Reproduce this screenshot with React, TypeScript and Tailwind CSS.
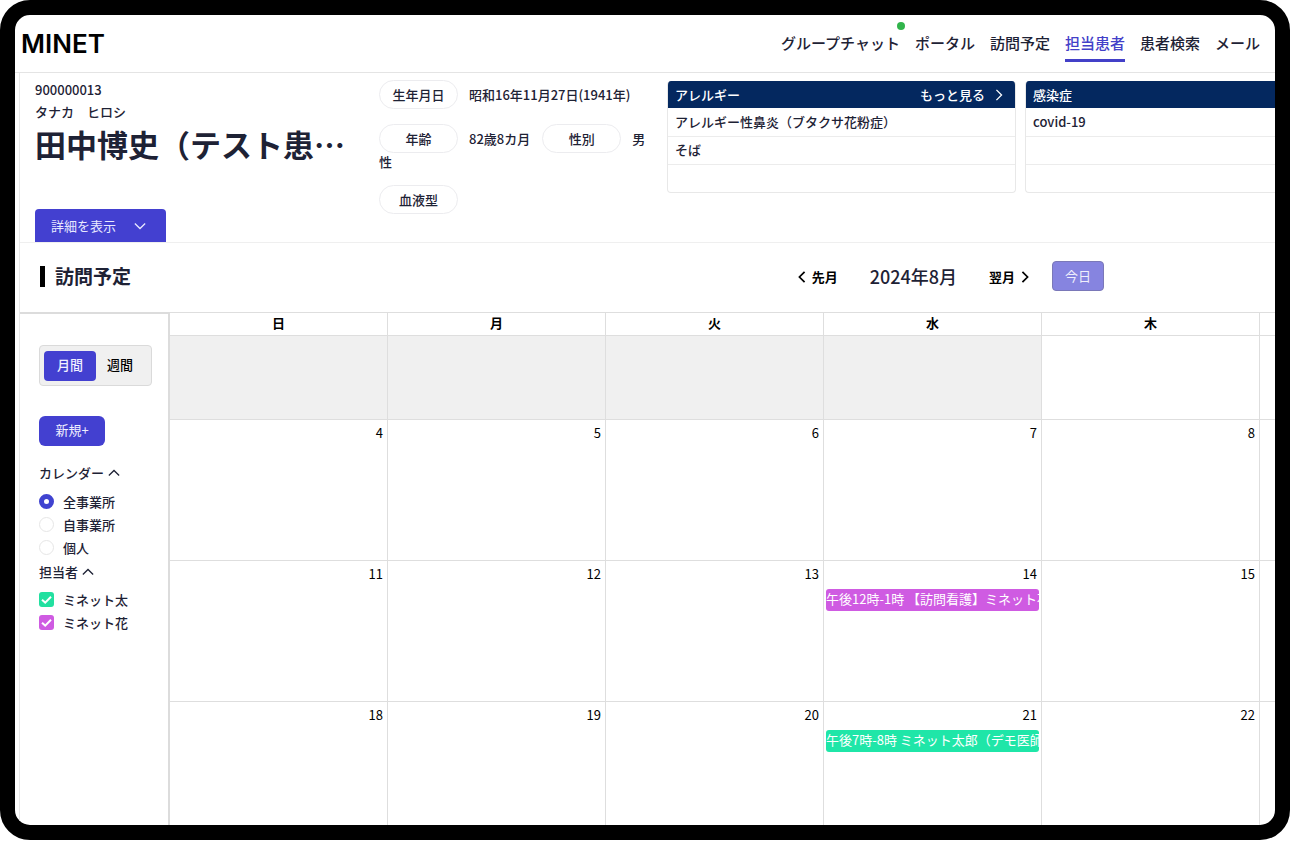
import { useState, type ReactNode } from "react";
import clsx from "clsx";

type Direction = "left" | "right" | "up" | "down";

const chevrons: Record<Direction, string> = {
  left: "M10 1 4 7l6 6",
  right: "M4 1l6 6-6 6",
  up: "M1 10l6-6 6 6",
  down: "M1 4l6 6 6-6",
};

function Chevron({ direction, className }: { direction: Direction; className: string }) {
  return (
    <svg viewBox="0 0 14 14" fill="none" stroke="currentColor" className={className} aria-hidden="true">
      <path d={chevrons[direction]} />
    </svg>
  );
}

const navItems = [
  { label: "グループチャット", notice: true },
  { label: "ポータル" },
  { label: "訪問予定" },
  { label: "担当患者", active: true },
  { label: "患者検索" },
  { label: "メール" },
];

function Header() {
  return (
    <header className="flex h-[58px] shrink-0 items-center justify-between border-b border-[#e4e4e4] pl-[6px] pr-[15px]">
      <a href="#" className="font-[Inter,sans-serif] text-[26px] font-semibold leading-8 text-black">
        MINET
      </a>
      <nav className="flex gap-[15px] pb-[2px]">
        {navItems.map((item) => (
          <a
            key={item.label}
            href="#"
            className={clsx(
              "relative whitespace-nowrap border-b-[3px] pb-[6px] pt-[9px] text-[15px] font-medium leading-5",
              item.active ? "border-[#4340c8] text-[#4340c8]" : "border-transparent text-[#1e2235]",
            )}
          >
            {item.label}
            {item.notice && <span className="absolute -right-[5px] -top-[2px] size-2 rounded-full bg-[#31b44b]" />}
          </a>
        ))}
      </nav>
    </header>
  );
}

function Pill({ children }: { children: ReactNode }) {
  return (
    <span className="mr-[11px] inline-flex h-[29px] w-[79px] items-center justify-center rounded-full border border-[#ececef] align-middle">
      {children}
    </span>
  );
}

function InfoTable({ title, rows, more, className }: { title: string; rows: string[]; more?: boolean; className: string }) {
  return (
    <div className={clsx("overflow-hidden border-[#e8e8e8]", className)}>
      <table className="w-full border-collapse text-left">
        <thead className="bg-[#04285f] text-white">
          <tr>
            <th className="h-[27px] pl-[7px] pr-[10px] font-medium">
              <div className="flex items-center justify-between">
                {title}
                {more && (
                  <a href="#" className="flex items-center gap-2">
                    もっと見る
                    <Chevron direction="right" className="size-3 stroke-[1.5]" />
                  </a>
                )}
              </div>
            </th>
          </tr>
        </thead>
        <tbody>
          {rows.map((row, i) => (
            <tr key={i} className="border-b border-[#ececec] last:border-b-0">
              <td className="h-7 pl-[7px]">{row}</td>
            </tr>
          ))}
        </tbody>
      </table>
    </div>
  );
}

function PatientPanel() {
  return (
    <section className="flex h-[170px] shrink-0 overflow-hidden border-b border-[#efefef] pl-[15px] font-medium">
      <div className="flex w-[344px] shrink-0 flex-col">
        <p className="pt-[7px] leading-5">900000013</p>
        <p className="pt-[2px] leading-5">タナカ　ヒロシ</p>
        <h1 className="whitespace-nowrap text-[31px] font-bold leading-[44px]">田中博史（テスト患…</h1>
        <button className="mt-auto flex h-[33px] w-[131px] items-center gap-[18px] rounded-t-[4px] bg-[#4340d0] pl-4 font-normal text-[#e8e8ff]">
          詳細を表示
          <Chevron direction="down" className="size-3 stroke-[1.5]" />
        </button>
      </div>
      <div className="flex w-[272px] shrink-0 flex-col gap-[15px] pt-[7px] leading-4">
        <div>
          <Pill>生年月日</Pill>
          <span className="align-middle">昭和16年11月27日(1941年)</span>
        </div>
        <div>
          <Pill>年齢</Pill>
          <span className="mr-3 align-middle">82歳8カ月</span>
          <Pill>性別</Pill>
          <span className="align-middle">男性</span>
        </div>
        <div>
          <Pill>血液型</Pill>
        </div>
      </div>
      <div className="flex min-w-0 grow items-start gap-[9px] pl-4 pt-2">
        <InfoTable
          title="アレルギー"
          more
          rows={["アレルギー性鼻炎（ブタクサ花粉症）", "そば", ""]}
          className="w-[349px] shrink-0 rounded-[4px] border-x border-b"
        />
        <InfoTable title="感染症" rows={["covid-19", "", ""]} className="grow rounded-l-[4px] border-b border-l" />
      </div>
    </section>
  );
}

function ScheduleHeader() {
  return (
    <div className="flex h-[69px] shrink-0 items-center pb-[3px] pl-5 pr-[171px]">
      <h2 className="flex items-center gap-[10px] text-[19px] font-bold leading-7">
        <span className="h-[21px] w-[5px] bg-black" />
        訪問予定
      </h2>
      <div className="ml-auto flex items-center">
        <button className="flex items-center gap-1 pt-[2px] font-bold text-black">
          <Chevron direction="left" className="size-3 stroke-2" />
          先月
        </button>
        <p className="mx-8 text-[18px] font-medium leading-7">2024年8月</p>
        <button className="flex items-center gap-1 pt-[2px] font-bold text-black">
          翌月
          <Chevron direction="right" className="size-3 stroke-2" />
        </button>
        <button className="ml-[21px] h-[30px] w-[52px] rounded-[4px] border border-[#7a78b8] bg-[#8684e0] text-[#efeffc]">
          今日
        </button>
      </div>
    </div>
  );
}

const calendars = ["全事業所", "自事業所", "個人"];
const staff = [
  { name: "ミネット太", color: "bg-[#22e0a0]" },
  { name: "ミネット花", color: "bg-[#cf5be2]" },
];

function StaffCheckbox({ name, color }: { name: string; color: string }) {
  const [checked, setChecked] = useState(true);
  return (
    <label className="flex h-[23px] items-center gap-[9px]">
      <span className="grid size-[15px] grid-cols-1">
        <input
          type="checkbox"
          checked={checked}
          onChange={() => setChecked(!checked)}
          className={clsx(
            "col-start-1 row-start-1 size-[15px] appearance-none rounded-[3px]",
            checked ? color : "border border-[#e0e0e0]",
          )}
        />
        {checked && (
          <svg
            viewBox="0 0 15 15"
            fill="none"
            stroke="white"
            strokeWidth="2"
            className="pointer-events-none col-start-1 row-start-1 size-[15px]"
          >
            <path d="M3 7.8 6.2 10.6 12 4.8" />
          </svg>
        )}
      </span>
      {name}
    </label>
  );
}

function Sidebar() {
  const [selected, setSelected] = useState("全事業所");
  return (
    <aside className="flex w-[150px] shrink-0 flex-col items-start border-r-2 border-t-2 border-[#dcdcdc] pl-[19px] pt-[31px] font-medium">
      <div className="flex h-[41px] w-[113px] items-center rounded-[4px] border border-[#dadada] bg-[#f0f0f0] px-1">
        <button className="h-[30px] w-[52px] rounded-[4px] bg-[#4340d0] pb-[2px] text-[#efefff]">月間</button>
        <button className="h-[30px] w-12 pb-[2px] text-black">週間</button>
      </div>
      <button className="mt-[30px] h-[30px] w-[66px] rounded-[6px] bg-[#4340d0] pb-[2px] font-normal text-[#efefff]">
        新規+
      </button>
      <button className="mt-[17px] flex h-5 items-center gap-1">
        カレンダー
        <Chevron direction="up" className="size-3 stroke-[1.5]" />
      </button>
      <div className="mt-[7px]" role="radiogroup" aria-label="カレンダー">
        {calendars.map((name) => (
          <label key={name} className="flex h-[23px] items-center gap-[9px]">
            <input
              type="radio"
              name="calendar"
              checked={selected === name}
              onChange={() => setSelected(name)}
              className="size-[15px] appearance-none rounded-full border border-[#e6e6e6] bg-white checked:border-[5px] checked:border-[#4043d0]"
            />
            {name}
          </label>
        ))}
      </div>
      <button className="mt-[3px] flex h-5 items-center gap-1">
        担当者
        <Chevron direction="up" className="size-3 stroke-[1.5]" />
      </button>
      <div className="mt-[6px]">
        {staff.map((person) => (
          <StaffCheckbox key={person.name} {...person} />
        ))}
      </div>
    </aside>
  );
}

const weekdays = ["日", "月", "火", "水", "木", ""];
const weeks = [
  ["4", "5", "6", "7", "8", ""],
  ["11", "12", "13", "14", "15", ""],
  ["18", "19", "20", "21", "22", ""],
];
const events: Record<string, { title: string; color: string }> = {
  "14": { title: "午後12時-1時 【訪問看護】ミネット花", color: "bg-[#cf5be2]" },
  "21": { title: "午後7時-8時 ミネット太郎（デモ医師）", color: "bg-[#1fe6a8]" },
};

function Calendar() {
  return (
    <div className="min-w-0 grow overflow-hidden">
      <table className="w-full table-fixed border-separate border-spacing-0 border-t border-[#dedede] text-black">
        <colgroup>
          {weekdays.map((_, i) => (
            <col key={i} className={i < 5 ? "w-[218px]" : ""} />
          ))}
        </colgroup>
        <thead>
          <tr>
            {weekdays.map((day, i) => (
              <th
                key={i}
                className="h-[23px] border-b border-r border-[#dedede] p-0 align-top font-bold leading-5 last:border-r-0"
              >
                {day}
              </th>
            ))}
          </tr>
        </thead>
        <tbody>
          <tr>
            {weekdays.map((_, i) => (
              <td
                key={i}
                className={clsx("h-[84px] border-b border-r border-[#dedede] last:border-r-0", i < 4 && "bg-[#f0f0f0]")}
              />
            ))}
          </tr>
          {weeks.map((week, w) => (
            <tr key={w}>
              {week.map((day, i) => (
                <td key={i} className="h-[141px] border-b border-r border-[#dedede] p-0 align-top last:border-r-0">
                  <p className="h-7 pr-1 pt-[3px] text-right leading-5">{day}</p>
                  {events[day] && (
                    <button
                      className={clsx(
                        "ml-[2px] block h-[22px] w-[213px] overflow-hidden whitespace-nowrap rounded-[3px] pb-[2px] text-left text-white",
                        events[day].color,
                      )}
                    >
                      {events[day].title}
                    </button>
                  )}
                </td>
              ))}
            </tr>
          ))}
        </tbody>
      </table>
    </div>
  );
}

export default function App() {
  return (
    <div className="h-screen bg-white pb-px font-['Noto_Sans_CJK_JP',sans-serif] text-[13px] text-[#1e2235]">
      <div className="flex h-full flex-col overflow-hidden rounded-[30px] border-[15px] border-black bg-white">
        <Header />
        <main className="ml-1 flex min-h-0 grow flex-col border-l border-[#e8e8e8]">
          <PatientPanel />
          <ScheduleHeader />
          <div className="flex min-h-0 grow overflow-hidden">
            <Sidebar />
            <Calendar />
          </div>
        </main>
      </div>
    </div>
  );
}
